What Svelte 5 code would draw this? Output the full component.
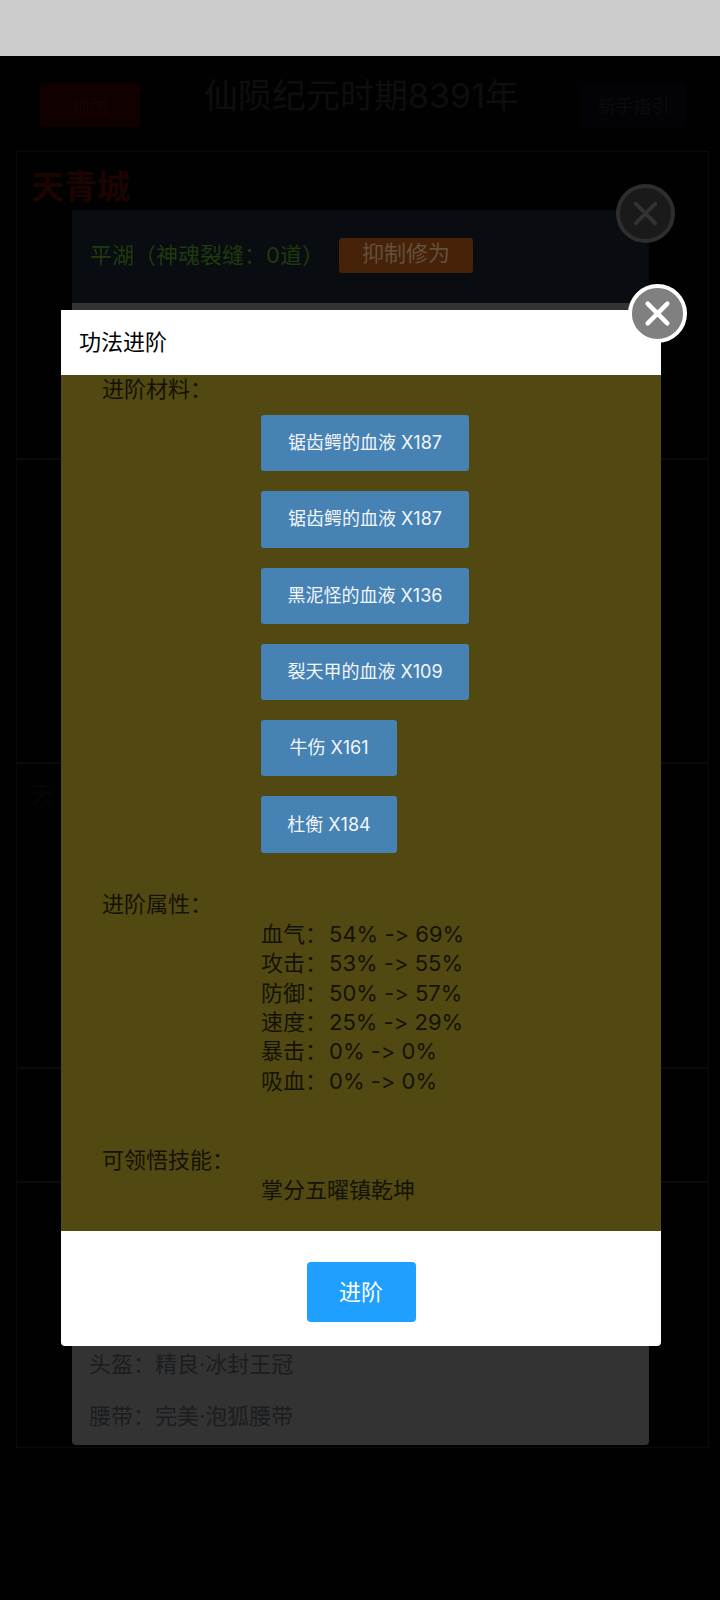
<script>
  const materials = ['锯齿鳄的血液 X187','锯齿鳄的血液 X187','黑泥怪的血液 X136','裂天甲的血液 X109','牛伤 X161','杜衡 X184'];
  const attrs = [['血气','54% -> 69%'],['攻击','53% -> 55%'],['防御','50% -> 57%'],['速度','25% -> 29%'],['暴击','0% -> 0%'],['吸血','0% -> 0%']];
  const sections = [308, 304, 305, 114, 264];
</script>

<div class="page">
  <div class="status"></div>
  <header class="top">
    <div class="nav red">地图</div>
    <h1>仙陨纪元时期8391年</h1>
    <div class="nav navy">新手指引</div>
  </header>
  <main class="panel">
    {#each sections as h, i}
      <section style="height:{h}px">
        {#if i === 0}<div class="city">天青城</div>{/if}
        {#if i === 2}<div class="faint">天</div>{/if}
      </section>
    {/each}
  </main>

  <div class="under">
    <div class="under-top">
      <span class="lake">平湖（神魂裂缝：0道）</span>
      <span class="suppress">抑制修为</span>
    </div>
    <div class="under-body">
      <div>头盔：精良·冰封王冠</div>
      <div>腰带：完美·泡狐腰带</div>
    </div>
    <svg class="close dim" viewBox="0 0 60 60" aria-hidden="true">
      <circle cx="30" cy="30" r="28" fill="#1a1a1a" stroke="#2e2e2e" stroke-width="4"/>
      <path d="M20 20 L40 40 M40 20 L20 40" stroke="#333" stroke-width="4" stroke-linecap="round"/>
    </svg>
  </div>

  <div class="modal">
    <div class="m-head">功法进阶</div>
    <div class="m-body">
      <div class="label">进阶材料：</div>
      <div class="mats">
        {#each materials as m}<button class="mat">{m}</button>{/each}
      </div>
      <div class="label attr-label">进阶属性：</div>
      <div class="attrs">
        {#each attrs as a}<div>{a[0]}：<span class="val">{a[1]}</span></div>{/each}
      </div>
      <div class="label skill-label">可领悟技能：</div>
      <div class="attrs">掌分五曜镇乾坤</div>
    </div>
    <div class="m-foot"><button class="go">进阶</button></div>
    <svg class="close bright" viewBox="0 0 60 60" aria-hidden="true">
      <circle cx="30" cy="30" r="28" fill="#808080" stroke="#fff" stroke-width="4"/>
      <path d="M20 20 L40 40 M40 20 L20 40" stroke="#fff" stroke-width="4.5" stroke-linecap="round"/>
    </svg>
  </div>
</div>

<style>
  :global(html), :global(body) { margin: 0; background: #000; }
  :global(body) { overflow: hidden; }
  .page {
    position: relative; width: 720px; height: 1600px; background: #010101; overflow: hidden;
    font-family: Inter, "Noto Sans CJK SC", sans-serif; font-size: 22px;
    font-variant-ligatures: none; font-feature-settings: "calt" 0;
  }
  .status { height: 56px; background: #ccc; }
  .top { display: flex; align-items: flex-start; padding: 27px 34px 0 40px; height: 68px; }
  .nav { width: 100px; height: 44px; line-height: 48px; text-align: center; font-size: 18px; border-radius: 2px; }
  .red { background: #100000; color: #180404; }
  .navy { background: #020207; color: #0c0c0e; width: 105px; }
  h1 { flex: 1; margin: -11px 0 0; font-size: 34px; font-weight: 400; line-height: 48px; text-align: center; color: #0e0e0e; white-space: nowrap; padding-left: 2px; }
  .panel { margin-left: 16px; width: 693px; box-sizing: border-box; border: 1px solid #0a0a0a; }
  section { box-sizing: border-box; border-bottom: 2px solid #0a0a0a; padding: 12px 14px; }
  section:last-child { border-bottom: 0; }
  .city { font-size: 33px; line-height: 46px; font-weight: 700; color: #1c0400; }
  .faint { font-size: 22px; color: #060606; }
  .under {
    position: absolute; left: 72px; top: 210px; width: 577px; height: 1235px;
    display: flex; flex-direction: column; background: #333; border-radius: 0 0 4px 4px;
  }
  .under-top { height: 93px; flex: none; background: #090c11; display: flex; align-items: center; padding-left: 18px; box-sizing: border-box; gap: 15px; padding-bottom: 3px; }
  .lake { color: #1f3a0c; position: relative; top: -2px; }
  .suppress { width: 134px; height: 35px; line-height: 30px; text-align: center; background: #452208; color: #63503e; border-radius: 3px; }
  .under-body { margin-top: auto; padding: 0 0 3px 17px; color: #1b1d20; line-height: 52px; }
  .close { position: absolute; display: block; }
  .close.dim { left: 544px; top: -26px; width: 59px; height: 59px; }
  .modal {
    position: absolute; left: 61px; top: 310px; width: 600px; height: 1036px;
    display: flex; flex-direction: column; background: #fff; border-radius: 0 0 4px 4px;
  }
  .m-head { height: 65px; line-height: 64px; padding-left: 18px; color: #000; flex: none; }
  .m-body { height: 856px; flex: none; background: #524912; color: #141204; box-sizing: border-box; padding-left: 41px; }
  .label { line-height: 29px; }
  .mats { display: flex; flex-direction: column; align-items: flex-start; gap: 20px; margin: 11px 0 0 159px; }
  .mat {
    width: 208px; height: 56.3px; padding: 0 0 4px; border: 0; border-radius: 3px; background: #4682b4; color: #f2f6fa;
    font: inherit; font-size: 18px; white-space: nowrap; text-align: center;
  }
  .mat:nth-child(n+5) { width: 136px; }
  .attr-label { margin-top: 37px; }
  .attrs { margin-left: 159px; line-height: 29.4px; padding-top: 1px; }
  .val { margin-left: 2px; }
  .skill-label { margin-top: 50px; }
  .m-foot { flex: 1; display: flex; justify-content: center; padding-top: 31px; box-sizing: border-box; }
  .go { width: 109px; height: 60px; border: 0; border-radius: 4px; background: #1f9fff; color: #fff; font: inherit; font-size: 22px; padding-bottom: 6px; }
  .close.bright { left: 567px; top: -26px; width: 59px; height: 59px; }
</style>
